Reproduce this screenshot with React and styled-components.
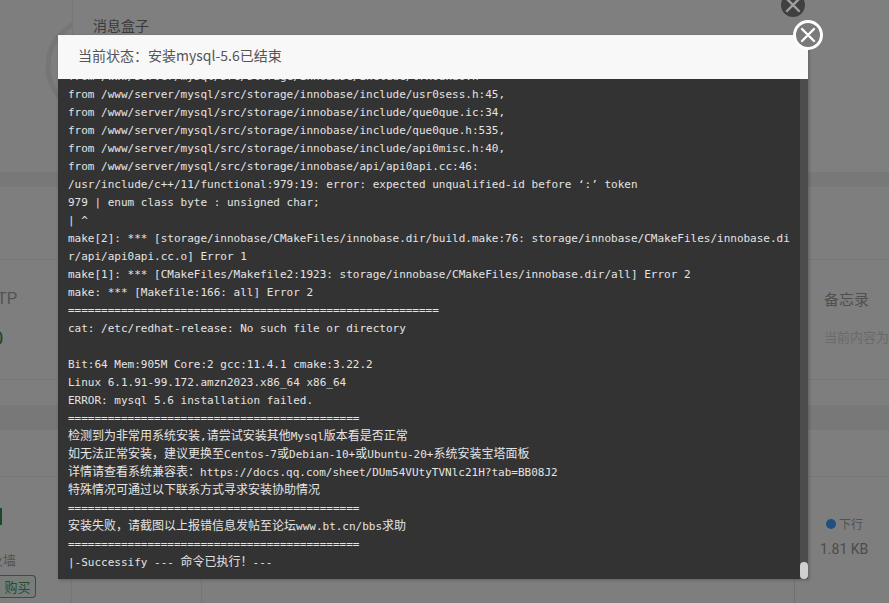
import React from "react";
import styled, { createGlobalStyle } from "styled-components";

const GlobalStyle = createGlobalStyle`
  html, body {
    margin: 0;
    padding: 0;
    height: 100%;
    overflow: hidden;
    background: #f5f5f5;
  }
  * {
    box-sizing: border-box;
  }
`;

const LOG_LINES = [
  "from /www/server/mysql/src/storage/innobase/include/trx0undo.h",
  "from /www/server/mysql/src/storage/innobase/include/usr0sess.h:45,",
  "from /www/server/mysql/src/storage/innobase/include/que0que.ic:34,",
  "from /www/server/mysql/src/storage/innobase/include/que0que.h:535,",
  "from /www/server/mysql/src/storage/innobase/include/api0misc.h:40,",
  "from /www/server/mysql/src/storage/innobase/api/api0api.cc:46:",
  "/usr/include/c++/11/functional:979:19: error: expected unqualified-id before ‘:’ token",
  "979 | enum class byte : unsigned char;",
  "| ^",
  "make[2]: *** [storage/innobase/CMakeFiles/innobase.dir/build.make:76: storage/innobase/CMakeFiles/innobase.dir/api/api0api.cc.o] Error 1",
  "make[1]: *** [CMakeFiles/Makefile2:1923: storage/innobase/CMakeFiles/innobase.dir/all] Error 2",
  "make: *** [Makefile:166: all] Error 2",
  "========================================================",
  "cat: /etc/redhat-release: No such file or directory",
  "\u00a0",
  "Bit:64 Mem:905M Core:2 gcc:11.4.1 cmake:3.22.2",
  "Linux 6.1.91-99.172.amzn2023.x86_64 x86_64",
  "ERROR: mysql 5.6 installation failed.",
  "============================================",
  "检测到为非常用系统安装,请尝试安装其他Mysql版本看是否正常",
  "如无法正常安装，建议更换至Centos-7或Debian-10+或Ubuntu-20+系统安装宝塔面板",
  "详情请查看系统兼容表：https://docs.qq.com/sheet/DUm54VUtyTVNlc21H?tab=BB08J2",
  "特殊情况可通过以下联系方式寻求安装协助情况",
  "============================================",
  "安装失败，请截图以上报错信息发帖至论坛www.bt.cn/bbs求助",
  "============================================",
  "|-Successify --- 命令已执行！---",
];

const CJK_RUN = /([\u3000-\u9fff\uff00-\uffef]+)/;

const renderLine = (line) =>
  line.split(CJK_RUN).map((part, i) => (i % 2 ? <Cjk key={i}>{part}</Cjk> : part));

const CloseIcon = ({ size, color }) => (
  <svg width={size} height={size} viewBox="0 0 20 20" fill="none" stroke={color} strokeWidth="2.4" strokeLinecap="round">
    <path d="M4 4 L16 16 M16 4 L4 16" />
  </svg>
);

export default function App() {
  return (
    <Page>
      <GlobalStyle />

      <TopSection>
        <GaugeSlot>
          <svg width="100" height="100" viewBox="0 0 100 100" fill="none">
            <circle cx="50" cy="50" r="47" stroke="#ececec" strokeWidth="5" />
          </svg>
        </GaugeSlot>
        <MessageCard>
          <CardTitle>消息盒子</CardTitle>
        </MessageCard>
      </TopSection>
      <Gutter $height={15} />
      <StatRow />
      <MiddleSection>
        <FtpBlock>
          <FtpLabel>TP</FtpLabel>
          <FtpValue>0</FtpValue>
        </FtpBlock>
        <MemoBlock>
          <MemoTitle>备忘录</MemoTitle>
          <MemoText>当前内容为空</MemoText>
        </MemoBlock>
      </MiddleSection>
      <MiddleFoot />
      <Gutter $height={25} />
      <BottomHead />
      <BottomSection>
        <SoftColumn>
          <GreenMark />
          <WallText>火墙</WallText>
          <BuyButton>购买</BuyButton>
        </SoftColumn>
        <SideColumn />
        <ChartArea />
        <NetBlock>
          <NetLabel>
            <NetDot />
            下行
          </NetLabel>
          <NetValue>1.81 KB</NetValue>
        </NetBlock>
      </BottomSection>

      <Overlay />
      <BackClose>
        <CloseIcon size={20} color="#a0a0a0" />
      </BackClose>

      <Modal>
        <ModalHeader>当前状态：安装mysql-5.6已结束</ModalHeader>
        <LogBody>
          <LogText>
            {LOG_LINES.map((line, i) => (
              <LogLine key={i}>{renderLine(line)}</LogLine>
            ))}
          </LogText>
          <ScrollTrack>
            <ScrollThumb />
          </ScrollTrack>
        </LogBody>
        <ModalClose>
          <CloseIcon size={20} color="#fff" />
        </ModalClose>
      </Modal>
    </Page>
  );
}

const Page = styled.div`
  position: relative;
  width: 889px;
  height: 603px;
  overflow: hidden;
  font-family: "Noto Sans CJK SC", "Liberation Sans", sans-serif;
  background: #fdfdfd;
`;

const TopSection = styled.section`
  height: 172px;
  display: flex;
`;

const GaugeSlot = styled.div`
  width: 72px;
  height: 172px;
  padding: 16px 0 0 45px;
  overflow: hidden;
  flex: none;
`;

const MessageCard = styled.div`
  flex: 1;
  padding: 14px 20px;
  border-left: 1px solid #ececec;
  background: #fff;
`;

const CardTitle = styled.h3`
  margin: 0;
  font-size: 14px;
  font-weight: 400;
  line-height: 22px;
  color: #747474;
`;

const Gutter = styled.div`
  height: ${(p) => p.$height}px;
  background: #f0f0f0;
`;

const StatRow = styled.div`
  height: 73px;
  border-bottom: 1px solid #f0f0f0;
`;

const MiddleSection = styled.section`
  height: 120px;
  display: flex;
  justify-content: space-between;
  border-bottom: 1px solid #f0f0f0;
`;

const MiddleFoot = styled.div`
  height: 25px;
`;

const FtpBlock = styled.div`
  margin-left: -3px;
  padding-top: 28px;
`;

const FtpLabel = styled.div`
  font-family: "Liberation Sans", sans-serif;
  font-size: 16px;
  line-height: 22px;
  color: #a8a8a8;
`;

const FtpValue = styled.div`
  margin: 16px 0 0 -5px;
  font-family: "Liberation Sans", sans-serif;
  font-size: 20px;
  line-height: 24px;
  color: #3a8f58;
`;

const MemoBlock = styled.div`
  width: 65px;
  padding-top: 28px;
  white-space: nowrap;
`;

const MemoTitle = styled.div`
  font-size: 15px;
  line-height: 22px;
  color: #a0a0a0;
`;

const MemoText = styled.div`
  margin-top: 17px;
  font-size: 13px;
  line-height: 20px;
  color: #d4d4d4;
`;

const BottomHead = styled.div`
  height: 47px;
  border-bottom: 1px solid #f0f0f0;
`;

const BottomSection = styled.section`
  height: 126px;
  display: flex;
`;

const SoftColumn = styled.div`
  width: 72px;
  flex: none;
  padding-top: 31px;
  border-right: 1px solid #ececec;
`;

const GreenMark = styled.div`
  width: 2px;
  height: 17px;
  background: #3a8f58;
`;

const WallText = styled.div`
  margin: 25px 0 0 -10px;
  font-size: 13px;
  line-height: 20px;
  color: #a4a4a4;
`;

const BuyButton = styled.div`
  width: 36px;
  height: 23px;
  margin: 5px 0 0 0;
  border: 1px solid #5aa878;
  border-left: 0;
  border-radius: 0 4px 4px 0;
  font-size: 13px;
  line-height: 21px;
  text-align: center;
  color: #4a9c68;
  background: #f2fbf4;
`;

const SideColumn = styled.div`
  width: 130px;
  flex: none;
  border-right: 1px solid #ececec;
`;

const ChartArea = styled.div`
  flex: 1;
  border-right: 1px solid #e0e0e0;
`;

const NetBlock = styled.div`
  width: 94px;
  flex: none;
  padding: 38px 0 0 25px;
`;

const NetLabel = styled.div`
  display: flex;
  align-items: center;
  gap: 3px;
  margin-left: 6px;
  font-size: 12px;
  line-height: 18px;
  color: #a4a4a4;
`;

const NetDot = styled.span`
  width: 10px;
  height: 10px;
  border-radius: 50%;
  background: #3fa0ff;
`;

const NetValue = styled.div`
  margin-top: 6px;
  font-family: "Roboto", "Liberation Sans", sans-serif;
  font-size: 14px;
  line-height: 20px;
  white-space: nowrap;
  color: #969696;
`;

const Overlay = styled.div`
  position: absolute;
  inset: 0;
  background: rgba(0, 0, 0, 0.5);
`;

const BackClose = styled.div`
  position: absolute;
  left: 781px;
  top: -7px;
  width: 24px;
  height: 24px;
  display: flex;
  align-items: center;
  justify-content: center;
  border-radius: 50%;
  background: #404040;
`;

const Modal = styled.div`
  position: absolute;
  left: 58px;
  top: 35px;
  width: 750px;
  height: 544px;
  display: flex;
  flex-direction: column;
  box-shadow: 1px 1px 3px rgba(0, 0, 0, 0.25);
`;

const ModalHeader = styled.div`
  height: 44px;
  padding-left: 20px;
  font-size: 14px;
  line-height: 41px;
  color: #555;
  background: #f8f8f8;
`;

const LogBody = styled.div`
  flex: 1;
  min-height: 0;
  display: flex;
  background: #333;
`;

const LogText = styled.div`
  flex: 1;
  min-width: 0;
  height: 500px;
  overflow: hidden;
  display: flex;
  flex-direction: column;
  justify-content: flex-end;
  padding: 0 10px 7px;
  font-family: "DejaVu Sans Mono", "Noto Sans CJK SC", monospace;
  font-size: 11px;
  line-height: 18px;
  color: #e4e4e4;
`;

const LogLine = styled.div`
  flex: none;
  word-break: break-all;
`;

const Cjk = styled.span`
  font-family: "Noto Sans CJK SC", sans-serif;
  font-size: 12px;
  line-height: 1;
`;

const ScrollTrack = styled.div`
  width: 8px;
  display: flex;
  align-items: flex-end;
  background: #4c4c4c;
`;

const ScrollThumb = styled.div`
  width: 8px;
  height: 17px;
  border-radius: 4px;
  background: #d0d0d0;
`;

const ModalClose = styled.div`
  position: absolute;
  right: -15px;
  top: -15px;
  width: 30px;
  height: 30px;
  display: flex;
  align-items: center;
  justify-content: center;
  border: 3px solid #fff;
  border-radius: 50%;
  background: #7a7a7a;
`;
